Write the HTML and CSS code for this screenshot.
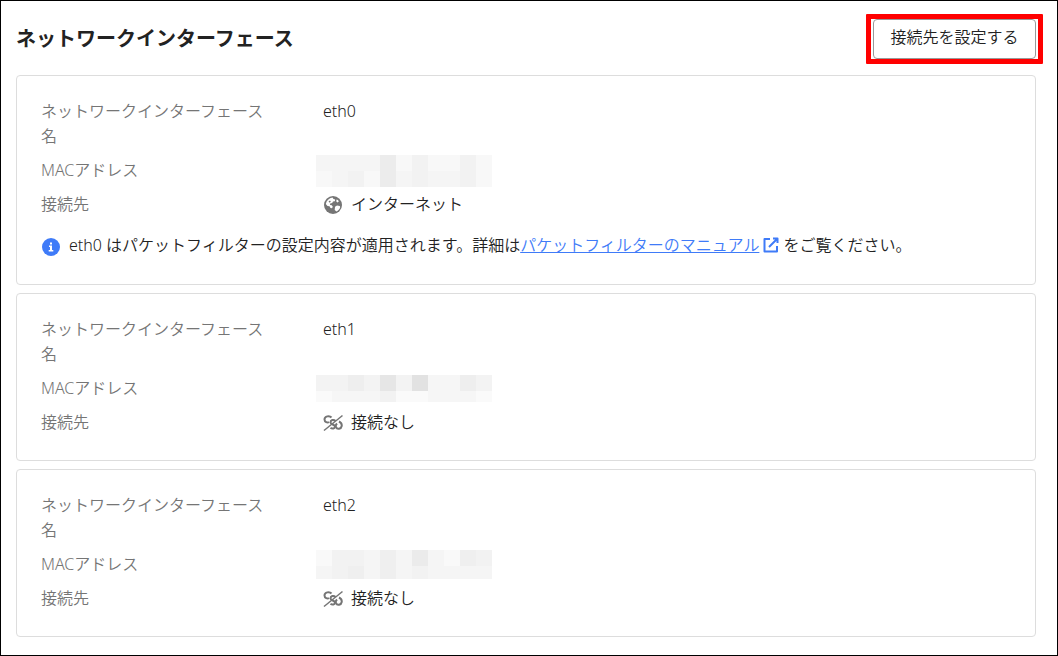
FILE: index.html
```
<!DOCTYPE html>
<html lang="ja">
<head>
  <meta charset="UTF-8">
  <meta name="viewport" content="width=device-width, initial-scale=1.0">
  <title>ネットワークインターフェース</title>
  <link rel="stylesheet" href="styles.css">
</head>
<body>
  <main class="page">
    <header class="page-header">
      <h1>ネットワークインターフェース</h1>
      <div class="highlight">
        <button type="button" class="connect-button">接続先を設定する</button>
      </div>
    </header>

    <section class="card">
      <dl class="details">
        <dt>ネットワークインターフェース名</dt>
        <dd>eth0</dd>
        <dt>MACアドレス</dt>
        <dd>
          <svg class="masked" width="176" height="32" viewBox="0 0 176 32" shape-rendering="crispEdges" aria-hidden="true">
            <path fill="#f5f5f5" d="M0 0h176v32H0z"/>
            <path fill="#f8f8f8" d="M0 16h16v16H0zM48 16h16v16H48zM80 0h16v16H80zM112 0h32v16h-32zM160 0h16v32h-16z"/>
            <path fill="#f2f2f2" d="M32 16h16v16H32zM96 0h16v32H96zM144 0h16v32h-16z"/>
            <path fill="#ececec" d="M64 0h16v32H64z"/>
          </svg>
        </dd>
        <dt>接続先</dt>
        <dd>
          <svg class="icon" viewBox="0 0 20 20" aria-hidden="true">
            <circle cx="10" cy="10" r="9" fill="#757575"/>
            <path fill="#fff" d="M9.500 2.500C6 3 3.500 5.500 2.800 9l1.700 2 2 .3 1 1.700 1.500.2.800-1.400-1-1.500-1.800-.3.200-1.500 2-.5.800-1.500 1.800-.3.400-1.700-1.700-.5z"/>
            <path fill="#fff" d="M12 11.800l2-1.300 2.800.5.400 1.200c-.6 2-2 3.500-3.700 4.300l-1.800-1.500zM13.500 4.500l1.500.5.800 1.500-1.300 1-1.200-1z"/>
            <path fill="#757575" d="M5.500 6.500l1.500-1 .8 1-1 1.300z"/>
          </svg>
          インターネット
        </dd>
      </dl>
      <div class="note">
        <svg class="icon" viewBox="0 0 20 20" aria-hidden="true">
          <circle cx="10" cy="10" r="9" fill="#3f7bf8"/>
          <path fill="#fff" d="M9 5.500h2v2H9zM8 8.500h3v4.500h1.300v1.500H7.700V13H9v-3H8z"/>
        </svg>
        <p>eth0 はパケットフィルターの設定内容が適用されます。詳細は<a href="#">パケットフィルターのマニュアル<svg class="external" viewBox="0 0 16 16" aria-hidden="true"><path fill="none" stroke="currentColor" stroke-width="2" stroke-linejoin="round" d="M7 2H1.500v12.500H14V9M10 1.500h4.500V6M14 2L6 10"/></svg></a>をご覧ください。</p>
      </div>
    </section>

    <section class="card">
      <dl class="details">
        <dt>ネットワークインターフェース名</dt>
        <dd>eth1</dd>
        <dt>MACアドレス</dt>
        <dd>
          <svg class="masked" width="176" height="27" viewBox="0 0 176 27" shape-rendering="crispEdges" aria-hidden="true">
            <path fill="#f3f3f3" d="M0 0h176v16H0z"/>
            <path fill="#f6f6f6" d="M112 0h32v16h-32zM16 16h160v11H16z"/>
            <path fill="#fafafa" d="M0 16h16v11H0zM80 16h32v11H80zM160 16h16v11h-16z"/>
            <path fill="#eee" d="M32 0h16v16H32zM144 0h16v16h-16z"/>
            <path fill="#e6e6e6" d="M64 0h16v16H64z"/>
            <path fill="#e2e2e2" d="M96 0h16v16H96z"/>
            <path fill="#f2f2f2" d="M64 16h16v11H64z"/>
          </svg>
        </dd>
        <dt>接続先</dt>
        <dd>
          <svg class="icon" viewBox="0 0 20 20" aria-hidden="true">
            <g fill="none" stroke="#757575" stroke-width="2">
              <path d="M8.500 4.500C6.500 2.300 1.500 3 1.500 6.500c0 2.500 3 3.500 4.500 2.500"/>
              <path d="M12.500 8c-2-2-5-1-5 1.500 0 2 4.500 2 4.500 4 0 2.200-2.800 2.700-4.500 1.200"/>
              <path d="M16 8.500c2 1 3 2.500 2.700 4.500-.5 3-4.500 3.800-5.700 1.200-.6-1.300 0-2.700 1-3.700"/>
              <path stroke-width="1.500" d="M1 17.500L19.500 2.500"/>
            </g>
          </svg>
          接続なし
        </dd>
      </dl>
    </section>

    <section class="card">
      <dl class="details">
        <dt>ネットワークインターフェース名</dt>
        <dd>eth2</dd>
        <dt>MACアドレス</dt>
        <dd>
          <svg class="masked" width="176" height="29" viewBox="0 0 176 29" shape-rendering="crispEdges" aria-hidden="true">
            <path fill="#f5f5f5" d="M0 0h176v29H0z"/>
            <path fill="#f9f9f9" d="M0 0h16v16H0zM128 0h16v16h-16z"/>
            <path fill="#f2f2f2" d="M16 0h32v16H16zM16 16h16v13H16zM96 16h16v13H96zM160 0h16v16h-16z"/>
            <path fill="#efefef" d="M32 16h16v13H32zM64 0h16v29H64zM144 0h16v16h-16z"/>
            <path fill="#ebebeb" d="M96 0h16v16H96z"/>
          </svg>
        </dd>
        <dt>接続先</dt>
        <dd>
          <svg class="icon" viewBox="0 0 20 20" aria-hidden="true">
            <g fill="none" stroke="#757575" stroke-width="2">
              <path d="M8.500 4.500C6.500 2.300 1.500 3 1.500 6.500c0 2.500 3 3.500 4.500 2.500"/>
              <path d="M12.500 8c-2-2-5-1-5 1.500 0 2 4.500 2 4.500 4 0 2.200-2.800 2.700-4.500 1.200"/>
              <path d="M16 8.500c2 1 3 2.500 2.700 4.500-.5 3-4.500 3.800-5.700 1.200-.6-1.300 0-2.700 1-3.700"/>
              <path stroke-width="1.500" d="M1 17.500L19.500 2.500"/>
            </g>
          </svg>
          接続なし
        </dd>
      </dl>
    </section>
  </main>
</body>
</html>
```
FILE: styles.css
```
* { box-sizing: border-box; }
body { margin: 0; font-family: "Noto Sans", "Noto Sans CJK JP", sans-serif; font-size: 16px; font-weight: 350; line-height: 25px; color: #222; background: #fff; }
.page { min-height: 100vh; border: 1px solid #000; padding: 13px 21px 17px 15px; display: flex; flex-direction: column; gap: 8px; }

.page-header { display: flex; justify-content: space-between; align-items: center; margin-bottom: 3px; }
h1 { margin: 0; font-size: 20px; font-weight: 700; line-height: 28px; }
.highlight { border: 5px solid #f00; border-radius: 1px; padding: 0 2px; margin-right: -7px; }
.connect-button { display: block; min-width: 163px; height: 40px; padding: 0 16px 4px; border: 1px solid #999; border-radius: 4px; background: #fff; color: inherit; font: inherit; cursor: pointer; }
.connect-button:hover { background: #f5f5f5; }

.card { border: 1px solid #ddd; border-radius: 4px; padding: 23px 24px 25px; }
.details { display: grid; grid-template-columns: 234px 1fr; gap: 9px 48px; margin: 0; }
dt { color: #757575; }
dd { margin: 0; display: flex; align-items: center; align-self: start; gap: 8px; height: 25px; }
.icon { width: 20px; height: 20px; flex: none; }
.masked { flex: none; margin-left: -7px; }

.note { display: flex; align-items: flex-end; gap: 8px; margin-top: 16px; padding-bottom: 2px; }
.note p { margin: 0; line-height: 24px; }
.note a { color: #3f7bf8; }
.external { width: 16px; height: 16px; margin: 0 4px; vertical-align: -2px; }
```
